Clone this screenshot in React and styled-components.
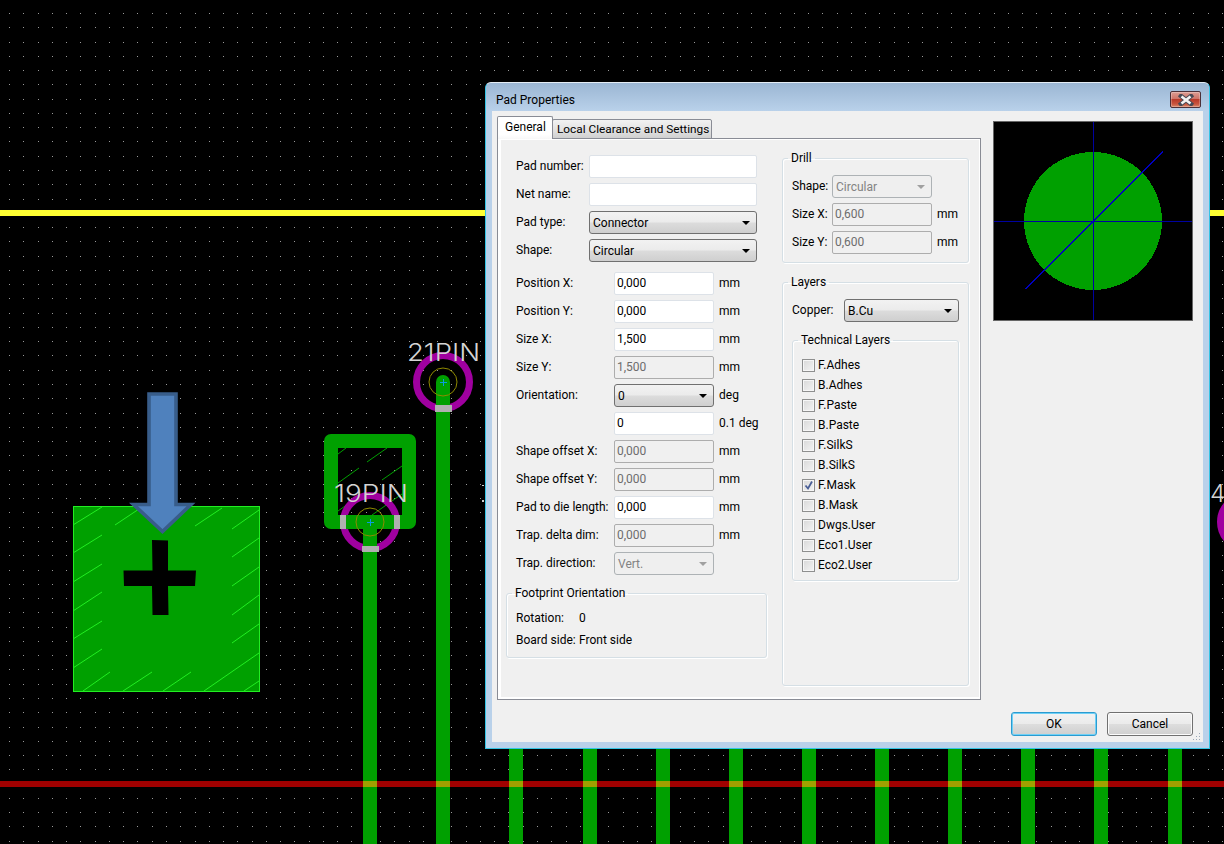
import React from "react";
import styled, { createGlobalStyle } from "styled-components";

const GlobalStyle = createGlobalStyle`
  html, body {
    margin: 0;
    padding: 0;
    background: #000;
  }
  * {
    box-sizing: border-box;
  }
`;

const GREEN = "#00a000";
const TRACKS = [370, 443, 516, 590, 663, 736, 809, 882, 955, 1028, 1101, 1175];

const HATCH = [
  [73, 525, 102, 507], [115, 525, 139, 509], [195, 526, 222, 508],
  [73, 553, 102, 535], [73, 582, 102, 564], [73, 611, 102, 592], [73, 639, 102, 621], [73, 668, 102, 649],
  [232, 529, 259, 510], [232, 557, 259, 538], [232, 586, 259, 567], [232, 615, 259, 595], [232, 643, 259, 624],
  [83, 691, 110, 672], [123, 691, 152, 672], [163, 691, 191, 672], [204, 691, 259, 653], [244, 691, 259, 681],
];

const SMALL_HATCH = [
  [338, 454, 346, 448], [367, 462, 387, 448], [338, 483, 359, 468],
  [382, 480, 402, 466], [338, 511, 358, 497], [372, 515, 402, 494],
];

const LAYERS = [
  "F.Adhes", "B.Adhes", "F.Paste", "B.Paste", "F.SilkS", "B.SilkS",
  "F.Mask", "B.Mask", "Dwgs.User", "Eco1.User", "Eco2.User",
];

// grid dots are one path so the svg stays small
function gridPath() {
  let d = "";
  for (let i = 0; i < 86; i++) {
    for (let j = 0; j < 60; j++) {
      d += `M${Math.round(9 + i * 14.27)} ${Math.round(13 + j * 14.27)}h1v1h-1z`;
    }
  }
  return d;
}

const Desktop = styled.div`
  position: relative;
  width: 1224px;
  height: 844px;
  overflow: hidden;
  background: #000;
  font-family: Roboto, "Noto Sans", sans-serif;
  font-size: 12px;
  color: #000;
`;

const Board = styled.svg`
  display: block;
`;

const PinLabel = styled.text`
  font-family: Inter, "Liberation Sans", sans-serif;
  font-weight: 300;
  font-size: 24.500px;
  fill: #d4d4d4;
`;

const Window = styled.div`
  position: absolute;
  left: 485px;
  top: 82px;
  width: 725px;
  height: 667px;
  display: flex;
  flex-direction: column;
  padding: 0 6px 6px;
  background: #b9d1ea;
  border: 1px solid #35c4e5;
  border-top-color: #e4ecf4;
  border-radius: 6px 6px 0 0;
`;

const TitleBar = styled.div`
  height: 28px;
  margin: 0 -6px;
  padding: 0 8px 3px 10px;
  display: flex;
  align-items: flex-end;
  justify-content: space-between;
  background: linear-gradient(#9bb6d3, #b9d1ea);
  border-radius: 5px 5px 0 0;
  line-height: 16px;
`;

const CloseButton = styled.div`
  width: 31px;
  height: 17px;
  display: flex;
  align-items: center;
  justify-content: center;
  border: 1px solid #4c3038;
  border-radius: 2px;
  background: linear-gradient(#dc9d94 0%, #cf7468 45%, #b93a2a 50%, #c9553f 80%, #d98a6c 100%);
  box-shadow: inset 0 0 0 1px rgba(255, 255, 255, 0.25);
`;

const Client = styled.div`
  flex: 1;
  display: flex;
  flex-direction: column;
  padding: 5px 10px 6px 5px;
  background: #f0f0f0;
`;

const TopRow = styled.div`
  display: flex;
  gap: 12px;
`;

const Notebook = styled.div`
  width: 484px;
`;

const TabBar = styled.div`
  position: relative;
  z-index: 1;
  height: 23px;
  margin-bottom: -1px;
  display: flex;
  align-items: flex-start;
`;

const Tab = styled.div`
  height: ${(p) => (p.$active ? "23px" : "20px")};
  margin-top: ${(p) => (p.$active ? "0" : "3px")};
  padding: ${(p) => (p.$active ? "2px 0 0 7px" : "1px 0 0 4px")};
  width: ${(p) => (p.$active ? "56px" : "160px")};
  margin-left: ${(p) => (p.$active ? "0" : "-1px")};
  border: 1px solid #898c95;
  border-bottom: ${(p) => (p.$active ? "none" : "1px solid #898c95")};
  background: ${(p) => (p.$active ? "linear-gradient(#fff, #fff 80%, #f8f8f8)" : "linear-gradient(#f2f2f2, #e4e4e4 50%, #d0d0d0)")};
  border-radius: 2px 2px 0 0;
  line-height: 17px;
  font-size: ${(p) => (p.$active ? "12px" : "11.800px")};
  white-space: nowrap;
`;

const TabPanel = styled.div`
  height: 562px;
  display: flex;
  gap: 15px;
  padding-left: 8px;
  background: #f0f0f0;
  border: 1px solid #898c95;
  box-shadow: inset 3px 1px 0 #fff, inset -1px -2px 0 #fff;
`;

const LeftColumn = styled.div`
  width: 261px;
  padding-top: 16px;
  display: flex;
  flex-direction: column;
`;

const RightColumn = styled.div`
  width: 187px;
  padding-top: 11px;
  display: flex;
  flex-direction: column;
`;

const FieldStack = styled.div`
  display: flex;
  flex-direction: column;
  gap: 5px;
  padding-left: ${(p) => p.$indent || 0}px;
  margin-bottom: ${(p) => p.$after || 0}px;
`;

const FieldRow = styled.div`
  height: 23px;
  display: flex;
  align-items: center;
`;

const Label = styled.span`
  width: ${(p) => p.$width}px;
  flex: none;
  white-space: nowrap;
`;

// field labels sit a pixel above the centre of their control
const FieldLabel = styled(Label)`
  padding-bottom: 2px;
`;

const Unit = styled.span`
  margin-left: 5px;
  padding-bottom: 2px;
  white-space: nowrap;
`;

const TextField = styled.input`
  width: ${(p) => p.$width}px;
  height: 23px;
  padding: 0 2px 2px;
  font: inherit;
  color: #000;
  background: #fff;
  border: 1px solid #dde2e8;
  border-radius: 2px;
  outline: none;

  &:disabled {
    color: #6d6d6d;
    background: #f0f0f0;
    border-color: #adadad;
  }
`;

const Combo = styled.div`
  position: relative;
  width: ${(p) => p.$width}px;
  height: 23px;
  padding-left: 3px;
  line-height: 22px;
  color: ${(p) => (p.$disabled ? "#838383" : "#000")};
  border: 1px solid ${(p) => (p.$disabled ? "#adb2b5" : "#707070")};
  border-radius: 3px;
  background: ${(p) => (p.$disabled ? "#efefef" : "linear-gradient(#f2f2f2, #ebebeb 48%, #dcdcdc 52%, #cfcfcf)")};

  &::after {
    content: "";
    position: absolute;
    right: 6px;
    top: 9px;
    border-style: solid;
    border-width: 4px 4px 0;
    border-color: ${(p) => (p.$disabled ? "#a0a0a0" : "#000")} transparent transparent;
  }
`;

const Group = styled.fieldset`
  margin: ${(p) => p.$before || 0}px 0 ${(p) => p.$after || 0}px;
  min-inline-size: 0;
  height: ${(p) => p.$height}px;
  padding: ${(p) => p.$top}px 9px 0 9px;
  border: 1px solid #d5dfe5;
  border-radius: 3px;
  box-shadow: 1px 1px 0 #fff, inset 1px 1px 0 #fff;
`;

const GroupTitle = styled.legend`
  margin-left: -4px;
  padding: 0 3px;
  line-height: 16px;
  white-space: nowrap;
`;

const InfoRow = styled.div`
  height: 22px;
  display: flex;
  align-items: center;
`;

const CheckRow = styled.div`
  height: 20px;
  display: flex;
  align-items: center;
  gap: 3px;
`;

const CheckBox = styled.span`
  width: 13px;
  height: 13px;
  flex: none;
  display: flex;
  align-items: center;
  justify-content: center;
  border: 1px solid #8e8f8f;
  background: linear-gradient(135deg, #d8d8d8, #f4f4f4);
  box-shadow: inset 0 0 0 1px #f6f6f6;
`;

const Preview = styled.svg`
  display: block;
  flex: none;
  margin-top: 5px;
  border: 1px solid #666;
`;

const Footer = styled.div`
  margin-top: 12px;
  display: flex;
  justify-content: flex-end;
  gap: 10px;
`;

const Button = styled.div`
  width: 86px;
  height: 24px;
  text-align: center;
  line-height: 22px;
  border: 1px solid ${(p) => (p.$primary ? "#2b9bd0" : "#707070")};
  border-radius: 3px;
  background: linear-gradient(#f2f2f2, #ebebeb 48%, #dddddd 52%, #cfcfcf);
  box-shadow: inset 0 0 0 1px ${(p) => (p.$primary ? "#6fd0f6" : "#fbfbfb")};
`;

const Grip = styled.svg`
  position: absolute;
  right: 8px;
  bottom: 7px;
`;

function Field({ label, value = "", unit, disabled, width = 98, fieldWidth = 100 }) {
  return (
    <FieldRow>
      <FieldLabel $width={width}>{label}</FieldLabel>
      <TextField $width={fieldWidth} value={value} disabled={disabled} readOnly />
      {unit && <Unit>{unit}</Unit>}
    </FieldRow>
  );
}

function ComboField({ label, value, disabled, width = 98, fieldWidth = 100, unit }) {
  return (
    <FieldRow>
      <FieldLabel $width={width}>{label}</FieldLabel>
      <Combo $width={fieldWidth} $disabled={disabled}>{value}</Combo>
      {unit && <Unit>{unit}</Unit>}
    </FieldRow>
  );
}

function Pad({ x, y }) {
  return (
    <>
      <circle cx={x} cy={y} r="14" fill="none" stroke="#8f8a00" />
      <path d={`M${x - 3} ${y}h7M${x} ${y - 3}v7`} stroke="#0a9be0" shapeRendering="crispEdges" />
    </>
  );
}

function BoardView() {
  return (
    <Board width="1224" height="844" viewBox="0 0 1224 844">
      <path d={gridPath()} fill="#9a9a9a" />
      <rect x="0" y="210" width="1224" height="6" fill="#ffff33" />
      <rect x="0" y="781" width="1224" height="6" fill="#a00000" />

      <rect x="73.5" y="506.5" width="186" height="185" fill={GREEN} stroke="#22ee22" />
      {HATCH.map(([a, b, c, d]) => (
        <line key={`${a}-${b}`} x1={a} y1={b} x2={c} y2={d} stroke="#22ee22" />
      ))}
      <path d="M152 540l16 .5v30h28l-1 15.5h-27l.5 29h-16l-.5-29h-28l-.5-15.5h29z" fill="#000" />
      <path
        d="M149 394h27v110.500h15l-28.500 27l-29-27h15.500z"
        fill="#4f81bd"
        stroke="#385d8a"
        strokeWidth="3.6"
      />

      {SMALL_HATCH.map(([a, b, c, d]) => (
        <line key={`${a}-${b}`} x1={a} y1={b} x2={c} y2={d} stroke={GREEN} />
      ))}

      <circle cx="443" cy="382" r="26.500" fill="none" stroke="#a000a0" strokeWidth="7" />
      <circle cx="370" cy="522" r="26.500" fill="none" stroke="#a000a0" strokeWidth="7" />
      <circle cx="1247" cy="522" r="26.500" fill="none" stroke="#a000a0" strokeWidth="7" />

      {TRACKS.map((x) => (
        <rect key={x} x={x - 7} y={x === 370 ? 522 : x === 443 ? 382 : 740} width="14" height="462" fill={GREEN} />
      ))}
      <circle cx="443" cy="382" r="7" fill={GREEN} />
      <rect x="331" y="441" width="78" height="81" fill="none" stroke={GREEN} strokeWidth="14" strokeLinejoin="round" />
      {TRACKS.map((x) => (
        <rect key={x} x={x - 7} y="781" width="14" height="6" fill="#a0a000" />
      ))}

      <rect x="435" y="405" width="17" height="7" fill="#b0b0b0" />
      <rect x="362" y="546" width="17" height="6" fill="#b0b0b0" />
      <rect x="340" y="515" width="6" height="14" fill="#b0b0b0" />
      <rect x="394" y="515" width="6" height="14" fill="#b0b0b0" />
      <Pad x={443} y={382} />
      <Pad x={370} y={522} />

      <PinLabel x="407" y="361" textLength="73" lengthAdjust="spacingAndGlyphs">21PIN</PinLabel>
      <PinLabel x="334" y="502" textLength="74" lengthAdjust="spacingAndGlyphs">19PIN</PinLabel>
      <PinLabel x="1210" y="502">4</PinLabel>
      <path d="M482 485h2v1h-2zM482 500h2v2h-2z" fill="#cfcfcf" />
    </Board>
  );
}

export default function App() {
  return (
    <Desktop>
      <GlobalStyle />
      <BoardView />
      <Window>
        <TitleBar>
          <span>Pad Properties</span>
          <CloseButton>
            <svg width="16" height="12" viewBox="0 0 16 12">
              <path d="M3 2l10 8M13 2L3 10" stroke="#4a4a55" strokeWidth="4.500" strokeLinecap="square" />
              <path d="M3.500 2.500l9 7M12.500 2.500l-9 7" stroke="#f4f4f4" strokeWidth="2.600" />
            </svg>
          </CloseButton>
        </TitleBar>
        <Client>
          <TopRow>
            <Notebook>
              <TabBar>
                <Tab $active>General</Tab>
                <Tab>Local Clearance and Settings</Tab>
              </TabBar>
              <TabPanel>
                <LeftColumn>
                  <FieldStack $indent={10} $after={10}>
                    <Field label="Pad number:" width={73} fieldWidth={168} />
                    <Field label="Net name:" width={73} fieldWidth={168} />
                    <ComboField label="Pad type:" value="Connector" width={73} fieldWidth={168} />
                    <ComboField label="Shape:" value="Circular" width={73} fieldWidth={168} />
                  </FieldStack>
                  <FieldStack $indent={10} $after={10}>
                    <Field label="Position X:" value="0,000" unit="mm" />
                    <Field label="Position Y:" value="0,000" unit="mm" />
                    <Field label="Size X:" value="1,500" unit="mm" />
                    <Field label="Size Y:" value="1,500" unit="mm" disabled />
                    <ComboField label="Orientation:" value="0" unit="deg" />
                    <Field label="" value="0" unit="0.1 deg" />
                    <Field label="Shape offset X:" value="0,000" unit="mm" disabled />
                    <Field label="Shape offset Y:" value="0,000" unit="mm" disabled />
                    <Field label="Pad to die length:" value="0,000" unit="mm" />
                    <Field label="Trap. delta dim:" value="0,000" unit="mm" disabled />
                    <ComboField label="Trap. direction:" value="Vert." disabled />
                  </FieldStack>
                  <Group $height={73} $top={6}>
                    <GroupTitle>Footprint Orientation</GroupTitle>
                    <InfoRow>
                      <Label $width={63}>Rotation:</Label>
                      <span>0</span>
                    </InfoRow>
                    <InfoRow>
                      <Label $width={63}>Board side:</Label>
                      <span>Front side</span>
                    </InfoRow>
                  </Group>
                </LeftColumn>
                <RightColumn>
                  <Group $height={113} $top={9} $after={11}>
                    <GroupTitle>Drill</GroupTitle>
                    <FieldStack>
                      <ComboField label="Shape:" value="Circular" width={40} disabled />
                      <Field label="Size X:" value="0,600" unit="mm" width={40} disabled />
                      <Field label="Size Y:" value="0,600" unit="mm" width={40} disabled />
                    </FieldStack>
                  </Group>
                  <Group $height={412} $top={9}>
                    <GroupTitle>Layers</GroupTitle>
                    <ComboField label="Copper:" value="B.Cu" width={52} fieldWidth={115} />
                    <Group $height={249} $top={7} $before={10}>
                      <GroupTitle>Technical Layers</GroupTitle>
                      {LAYERS.map((name) => (
                        <CheckRow key={name}>
                          <CheckBox>
                            {name === "F.Mask" && (
                              <svg width="11" height="11" viewBox="0 0 11 11">
                                <path d="M2.500 5.500l2.500 3l4-7" fill="none" stroke="#4a5f97" strokeWidth="1.800" />
                              </svg>
                            )}
                          </CheckBox>
                          <span>{name}</span>
                        </CheckRow>
                      ))}
                    </Group>
                  </Group>
                </RightColumn>
              </TabPanel>
            </Notebook>
            <Preview width="200" height="200" viewBox="1 1 198 198">
              <rect x="1" y="1" width="198" height="198" fill="#000" />
              <circle cx="100" cy="100" r="69" fill={GREEN} shapeRendering="crispEdges" />
              <path d="M100.500 0v200M0 100.500h200" stroke="#0000a0" shapeRendering="crispEdges" />
              <line x1="32.500" y1="168" x2="170" y2="30.500" stroke="#0000c0" shapeRendering="crispEdges" />
            </Preview>
          </TopRow>
          <Footer>
            <Button $primary>OK</Button>
            <Button>Cancel</Button>
          </Footer>
        </Client>
        <Grip width="8" height="8" viewBox="0 0 8 8">
          <path d="M6 0h1v1H6zM3 3h1v1H3zM6 3h1v1H6zM0 6h1v1H0zM3 6h1v1H3zM6 6h1v1H6z" fill="#9aa8b8" />
        </Grip>
      </Window>
    </Desktop>
  );
}
